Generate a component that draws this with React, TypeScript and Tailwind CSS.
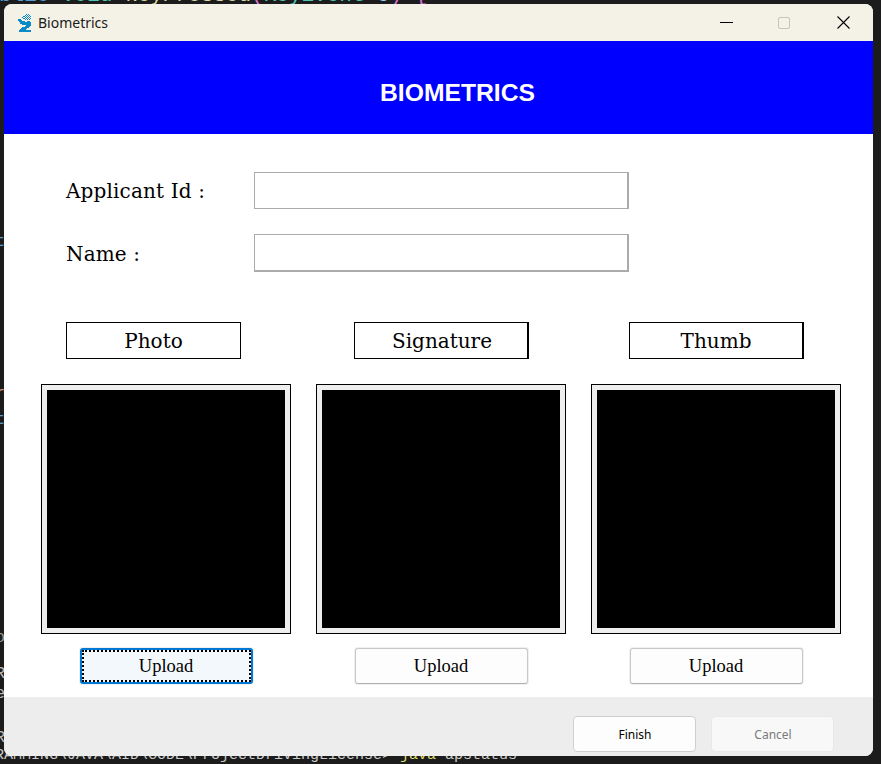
import React from "react";

const stripGlyphs = [
  { y: 232, ch: "t", color: "text-[#569cd6]" },
  { y: 384, ch: "r", color: "text-[#ce9178]" },
  { y: 410, ch: "t", color: "text-[#569cd6]" },
  { y: 628, ch: "o", color: "text-[#9a9a9a]" },
  { y: 664, ch: "R", color: "text-[#b8b8b8]" },
  { y: 684, ch: "e", color: "text-[#b8b8b8]" },
  { y: 728, ch: "R", color: "text-[#b8b8b8]" },
];

const dither = [
  [8, 0], [10, 0], [7, 1], [9, 1], [11, 1], [6, 2], [8, 2], [10, 2], [12, 2],
  [5, 3], [7, 3], [9, 3], [11, 3], [6, 4], [8, 4], [10, 4], [12, 4], [7, 5], [9, 5], [11, 5],
];

function Field({ label, bottom }: { label: string; bottom?: boolean }) {
  return (
    <div className="flex items-center h-[38px]">
      <span className="w-[188px] pt-[2px] text-[20px] tracking-[0.15px] text-black [font-family:'DejaVu_Serif',serif]">{label}</span>
      <div className={bottom ? "w-[375px] h-[38px] bg-white border border-[#ababab] border-b-2 border-r-2" : "w-[375px] h-[37px] bg-white border border-[#ababab] border-r-2"} />
    </div>
  );
}

function Column({ title, labelClass, thick, focus }: { title: string; labelClass: string; thick?: boolean; focus?: boolean }) {
  return (
    <div className="flex flex-col w-[250px]">
      <div className={`flex items-center justify-center h-[37px] w-[175px] bg-white border border-black text-[20px] text-black [font-family:'DejaVu_Serif',serif] ${thick ? "border-r-2" : ""} ${labelClass}`}>
        {title}
      </div>
      <div className="mt-[25px] w-[250px] h-[250px] border border-black bg-[#eeeeee] p-[5px]">
        <div className="w-full h-full bg-black" />
      </div>
      <div className="mt-[14px] flex justify-center">
        {focus ? (
          <button className="w-[173px] h-[36px] pt-[2px] rounded-[3px] border-2 border-[#0078d4] bg-[#f3f8fc] flex items-center justify-center text-[18.5px] text-black shadow-[0_0_0_1px_#f0f0f0] [font-family:'Liberation_Serif',serif] outline-2 outline-dotted outline-black -outline-offset-4">
            Upload
          </button>
        ) : (
          <button className="w-[173px] h-[36px] pt-[2px] rounded-[3px] border border-[#c8c8c8] border-b-[#b0b0b0] bg-[#fdfdfd] flex items-center justify-center text-[18.5px] text-black shadow-[0_0_0_1px_#f0f0f0] [font-family:'Liberation_Serif',serif]">
            Upload
          </button>
        )}
      </div>
    </div>
  );
}

export default function App() {
  return (
    <div className="relative w-[881px] h-[764px] overflow-hidden bg-[#1c1c1c] [font-family:'Liberation_Mono',monospace]">
      <div className="absolute left-[-1px] top-[-14px] whitespace-pre text-[21px] leading-[20px]">
        <span className="text-[#569cd6]">blic </span>
        <span className="text-[#4ec9b0]">void </span>
        <span className="text-[#dcdcaa]">keyPressed</span>
        <span className="text-[#da70d6]">(</span>
        <span className="text-[#4ec9b0]">KeyEvent </span>
        <span className="text-[#9cdcfe]">e</span>
        <span className="text-[#da70d6]">) {"{"}</span>
      </div>
      {stripGlyphs.map((g) => (
        <span key={g.y} className={`absolute left-[-5px] text-[17px] leading-[20px] ${g.color}`} style={{ top: g.y }}>
          {g.ch}
        </span>
      ))}
      <div className="absolute left-[-5px] top-[746px] whitespace-pre text-[15px] leading-[20px] text-[#cccccc]">
        RAMMING\JAVA\AID\CODE\ProjectDrivingLicense&gt; <span className="text-[#dcdc6a]">java</span> apstatus
      </div>

      <div className="absolute left-[4px] top-[4px] w-[869px] h-[752px] flex flex-col overflow-hidden rounded-lg bg-white">
        <div className="h-[37px] shrink-0 bg-[#f4f2e6] flex items-center">
          <svg className="ml-[13px]" width="15" height="18" viewBox="0 0 14 17" shapeRendering="crispEdges">
            {dither.map(([x, y]) => (
              <rect key={`${x}-${y}`} x={x} y={y} width="1" height="1" fill="#0a8ac6" />
            ))}
            <path d="M1 5h3v1h1v1h2v1h2V7h3v1h1v3h-1v1h-1v1h-2v1H8v1h5v2H2v-2h1v-1h1v-1h1v-1h2v-1h1v-1H5V9H3V8H2V7H1z" fill="#0a8ac6" />
          </svg>
          <span className="ml-[6px] text-[14px] text-[#1a1a1a] [font-family:'Noto_Sans',sans-serif]">Biometrics</span>
          <div className="ml-auto flex items-center">
            <svg width="13" height="13" viewBox="0 0 13 13" className="mr-[45px]"><path d="M0 6.5h13" stroke="#000" strokeWidth="1" /></svg>
            <div className="mr-[47px] w-[12px] h-[12px] rounded-[2px] border border-[#c8c6ba]" />
            <svg width="13" height="13" viewBox="0 0 13 13" className="mr-[23px]"><path d="M0.5 0.5l12 12M12.5 0.5l-12 12" stroke="#000" strokeWidth="1.1" /></svg>
          </div>
        </div>
        <div className="h-[93px] shrink-0 bg-[#0000ff] flex items-center justify-center pl-[38px] pt-[10px]">
          <span className="text-[24.7px] font-bold text-white [font-family:'Liberation_Sans',sans-serif]">BIOMETRICS</span>
        </div>
        <div className="flex-1 flex flex-col bg-white">
          <div className="pl-[62px] pt-[37px] flex flex-col gap-[25px]">
            <Field label="Applicant Id :" />
            <Field label="Name :" bottom />
          </div>
          <div className="pl-[37px] mt-[50px] flex gap-[25px]">
            <Column title="Photo" labelClass="ml-[25px]" focus />
            <Column title="Signature" labelClass="ml-[38px] pl-[2px]" thick />
            <Column title="Thumb" labelClass="ml-[38px]" thick />
          </div>
        </div>
        <div className="h-[59px] shrink-0 bg-[#ededed] flex items-start justify-end pt-[19px] pr-[39px] gap-[15px]">
          <button className="w-[123px] h-[36px] pt-[1px] pl-[1px] rounded-[4px] border border-[#cfcfcf] bg-[#fdfdfd] text-[12px] text-black [font-family:'Noto_Sans',sans-serif]">Finish</button>
          <button className="w-[123px] h-[36px] pt-[1px] pl-[1px] rounded-[4px] border border-[#e8e8e8] bg-[#f8f8f8] text-[12px] text-[#7a7a7a] [font-family:'Noto_Sans',sans-serif]">Cancel</button>
        </div>
      </div>
    </div>
  );
}
